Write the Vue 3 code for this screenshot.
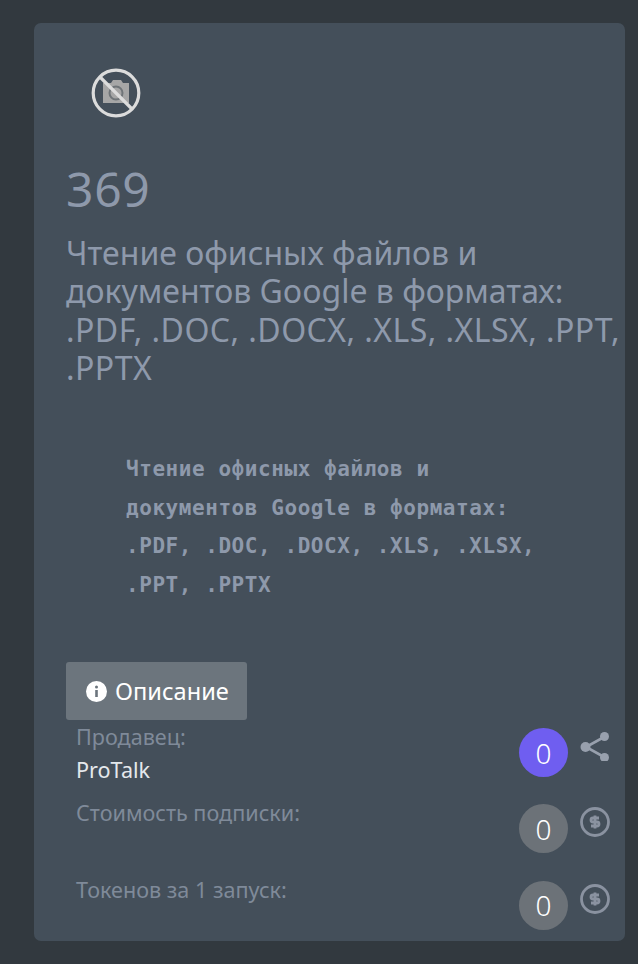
<script setup>
const rows = [
  { label: 'Продавец:', value: 'ProTalk', count: 0, icon: 'share' },
  { label: 'Стоимость подписки:', count: 0, icon: 'dollar' },
  { label: 'Токенов за 1 запуск:', count: 0, icon: 'dollar' }
]

const descLines = [
  'Чтение офисных файлов и',
  'документов Google в форматах:',
  '.PDF, .DOC, .DOCX, .XLS, .XLSX,',
  '.PPT, .PPTX'
]
</script>

<template>
  <main class="page">
    <section class="card">
      <div class="thumb">
        <svg width="50" height="50" viewBox="0 0 50 50">
          <path fill="#a6a6a6" d="M12 15h8l2-3h8l2 3h6v20H12z" />
          <circle cx="25" cy="25" r="6.500" fill="none" stroke="#6f7478" stroke-width="2" />
          <circle cx="25" cy="25" r="22.800" fill="none" stroke="#dcdcdc" stroke-width="3.200" />
          <path d="M9 9l32 32" stroke="#dcdcdc" stroke-width="3.200" />
        </svg>
      </div>

      <h1 class="num">369</h1>
      <h2 class="title">Чтение офисных файлов и документов Google в форматах: <span class="ext">.PDF, .DOC, .DOCX, .XLS, .XLSX, .PPT, .PPTX</span></h2>

      <pre class="desc"><code v-for="line in descLines" :key="line">{{ line }}</code></pre>

      <button class="btn">
        <svg width="21" height="21" viewBox="0 0 21 21">
          <circle cx="10.500" cy="10.500" r="10.500" fill="#fff" />
          <circle cx="10.500" cy="6" r="1.500" fill="#6c757d" />
          <path d="M9.200 9h2.600v7H9.200z" fill="#6c757d" />
        </svg>
        Описание
      </button>

      <div class="rows">
        <div v-for="row in rows" :key="row.label" class="row">
          <div class="info">
            <div class="label">{{ row.label }}</div>
            <div v-if="row.value" class="value">{{ row.value }}</div>
          </div>
          <div class="side">
            <span class="badge" :class="{ violet: row.icon === 'share' }">{{ row.count }}</span>
            <svg v-if="row.icon === 'share'" class="icon" width="30" height="30" viewBox="0 0 30 30">
              <path d="M25 5.500L6 16l19 10.500" fill="none" stroke="#98a0ad" stroke-width="2.600" />
              <circle cx="24.500" cy="5.500" r="4.500" fill="#98a0ad" />
              <circle cx="5.500" cy="16" r="5" fill="#98a0ad" />
              <circle cx="24.500" cy="26.500" r="4.500" fill="#98a0ad" />
            </svg>
            <svg v-else class="icon" width="30" height="30" viewBox="0 0 30 30">
              <circle cx="15" cy="15" r="13.500" fill="none" stroke="#8a92a0" stroke-width="2.800" />
              <path d="M19 11h-6a1.900 1.900 0 0 0 0 4h4a1.900 1.900 0 0 1 0 4h-6M15 8.500v13" fill="none" stroke="#8a92a0" stroke-width="2.800" />
            </svg>
          </div>
        </div>
      </div>
    </section>
  </main>
</template>

<style>
html, body {
  margin: 0;
  background: #32393f;
}
</style>

<style scoped>
.page {
  height: 964px;
  box-sizing: border-box;
  padding: 23px 13px 23px 34px;
  font-family: "Noto Sans", "Open Sans", sans-serif;
  overflow: hidden;
}

.card {
  height: 918px;
  box-sizing: border-box;
  background: #444f5a;
  border-radius: 7px;
  padding: 45px 0 0 32px;
  display: flex;
  flex-direction: column;
}

.thumb {
  margin-left: 25px;
  height: 50px;
}

.num {
  margin: 42px 0 0;
  font-size: 48px;
  line-height: 58px;
  font-weight: 400;
  letter-spacing: 0.7px;
  color: #8e99ab;
}

.title {
  margin: 16px 0 0;
  font-size: 32px;
  line-height: 38.400px;
  font-weight: 400;
  color: #8e99ab;
}

.ext {
  letter-spacing: 0.45px;
}

.desc {
  margin: 62.500px 0 0 60px;
  font-family: "DejaVu Sans Mono", monospace;
  font-size: 21px;
  letter-spacing: 0.56px;
  font-weight: 700;
  color: #8e99ab;
  display: flex;
  flex-direction: column;
}

.desc code {
  font-family: inherit;
  line-height: 38.500px;
}

.btn {
  margin-top: 58px;
  flex: none;
  width: 181px;
  height: 58px;
  background: #6c757d;
  color: #fff;
  border: 0;
  border-radius: 3px;
  display: flex;
  align-items: center;
  gap: 8px;
  font-family: inherit;
  font-size: 23.600px;
  padding: 0 0 0 20px;
}

.rows {
  display: flex;
  flex-direction: column;
}

.row {
  display: flex;
  justify-content: space-between;
  padding: 2px 15px 0 10px;
  height: 74.250px;
}

.label {
  font-size: 21.600px;
  line-height: 29px;
  color: #7f8a99;
}

.value {
  font-size: 21.600px;
  line-height: 38px;
  color: #e4e8ec;
}

.side {
  display: flex;
  align-items: flex-start;
  gap: 12px;
  margin-top: 6px;
}

.icon {
  margin-top: 3px;
}

.badge {
  width: 49px;
  height: 49px;
  border-radius: 50%;
  background: #6c7278;
  color: #fff;
  font-size: 28px;
  font-weight: 300;
  display: flex;
  align-items: center;
  justify-content: center;
}

.badge.violet {
  background: #6f5ef0;
}
</style>
